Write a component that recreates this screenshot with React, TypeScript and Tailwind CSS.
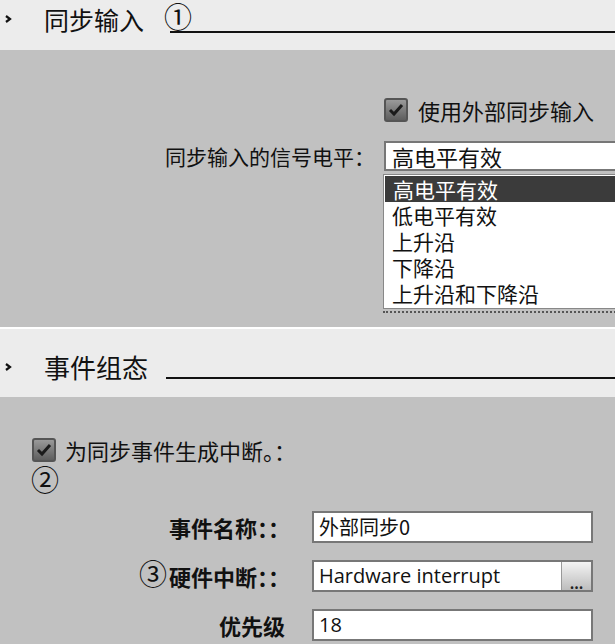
import React from 'react';

const Chevron: React.FC = () => (
    <svg width="8" height="10" viewBox="0 0 8 10" className="shrink-0">
        <path d="M2 2 L6 5 L2 8" stroke="#111" strokeWidth="2.2" fill="none" />
    </svg>
);

const CheckBox: React.FC = () => (
    <div className="w-[24px] h-[24px] rounded-[3px] border-2 border-[#555] bg-gradient-to-b from-[#9a9a9a] to-[#5e5e5e] flex items-center justify-center shrink-0">
        <svg width="16" height="14" viewBox="0 0 16 14">
            <path d="M2 7 L6 11 L14 2" stroke="#1b1b1b" strokeWidth="3" fill="none" />
        </svg>
    </div>
);

const SectionHeader: React.FC<{ title: string; mark?: string; titleSize: string; height: string; pad: string; lineTop: string; lineLeft: string }> = ({
    title,
    mark,
    titleSize,
    height,
    pad,
    lineTop,
    lineLeft,
}) => (
    <div className={`${height} ${pad} bg-[#ececec] flex items-start pl-[4px]`}>
        <div className="w-[40px] flex items-center h-[32px]">
            <Chevron />
        </div>
        <span className={`${titleSize} leading-[32px] text-[#111]`}>{title}</span>
        {mark && <span className="text-[28px] leading-[32px] ml-[20px] font-['Liberation_Serif','Noto_Sans_CJK_SC',serif]">{mark}</span>}
        <div className={`flex-1 h-[2px] bg-[#111] ${lineTop} ${lineLeft}`} />
    </div>
);

const TextBox: React.FC<{ value: string; button?: boolean; latin?: boolean }> = ({ value, button, latin }) => (
    <div className="h-[32px] bg-white border-2 border-[#777] flex items-center">
        <span className={`flex-1 pl-[5px] text-[20px] leading-none text-[#111] ${latin ? "font-['Open_Sans',sans-serif]" : ''}`}>{value}</span>
        {button && (
            <div className="w-[30px] h-full bg-gradient-to-b from-[#f4f4f4] to-[#bdbdbd] border-l border-[#999] flex items-end justify-center pb-[2px]">
                <span className="text-[14px] leading-[10px] font-bold text-[#222]">...</span>
            </div>
        )}
    </div>
);

const options = ['高电平有效', '低电平有效', '上升沿', '下降沿', '上升沿和下降沿'];

const App: React.FC = () => {
    return (
        <div className="w-[615px] h-[644px] overflow-hidden bg-[#c1c1c1] text-[#111] font-['Noto_Sans_CJK_SC',sans-serif]">
            {/* 同步输入 */}
            <SectionHeader title="同步输入" mark="①" titleSize="text-[25px]" height="h-[50px]" pad="pt-[3px]" lineTop="mt-[28px]" lineLeft="-ml-[22px]" />

            <div className="h-[277px] relative">
                <div className="grid grid-cols-[375px_1fr] gap-x-[9px] pt-[46px]">
                    <div />
                    <div className="flex items-center gap-[10px] h-[28px]">
                        <CheckBox />
                        <span className="text-[22px] leading-none">使用外部同步输入</span>
                    </div>
                    <div className="mt-[17px] h-[30px] flex items-center justify-end text-[21px] leading-none">同步输入的信号电平：</div>
                    <div className="mt-[17px] h-[30px] bg-white border-2 border-r-0 border-[#777] flex items-center pl-[6px]">
                        <span className="text-[22px] leading-none">高电平有效</span>
                    </div>
                </div>

                {/* open drop-down list */}
                <div className="absolute left-[383px] top-[124px] w-[240px]">
                    <div className="bg-white border border-[#888] pt-[1px] pb-[2px]">
                        {options.map((o, i) => (
                            <div
                                key={o}
                                className={`h-[26px] pl-[8px] text-[21px] leading-[26px] ${i === 0 ? 'bg-[#3b3b3b] text-white mx-[1px]' : 'text-[#111]'}`}
                            >
                                {o}
                            </div>
                        ))}
                    </div>
                    <div className="mt-[2px] border-b-2 border-dotted border-[#555]" />
                </div>
            </div>

            <div className="h-[2px] bg-white" />

            {/* 事件组态 */}
            <SectionHeader title="事件组态" titleSize="text-[26px]" height="h-[68px]" pad="pt-[22px]" lineTop="mt-[26px]" lineLeft="ml-[18px]" />

            <div className="pt-[40px]">
                <div className="flex items-center gap-[9px] pl-[32px] h-[26px]">
                    <CheckBox />
                    <span className="text-[22px] leading-none">为同步事件生成中断。：</span>
                </div>
                <div className="pl-[31px] mt-[5px] text-[28px] leading-[28px] font-['Liberation_Serif','Noto_Sans_CJK_SC',serif]">②</div>

                <div className="grid grid-cols-[290px_281px] gap-x-[22px] gap-y-[17px] mt-[15px]">
                    <div className="h-[32px] flex items-center justify-end text-[22px] font-bold leading-none">事件名称：：</div>
                    <TextBox value="外部同步0" />
                    <div className="h-[32px] flex items-center justify-end text-[22px] font-bold leading-none">
                        <span className="text-[28px] font-normal mr-[2px] font-['Liberation_Serif','Noto_Sans_CJK_SC',serif]">③</span>
                        硬件中断：：
                    </div>
                    <TextBox value="Hardware interrupt" button latin />
                    <div className="h-[32px] flex items-center justify-end text-[22px] font-bold leading-none pr-[5px]">优先级</div>
                    <TextBox value="18" latin />
                </div>
            </div>
        </div>
    );
};

export default App;
